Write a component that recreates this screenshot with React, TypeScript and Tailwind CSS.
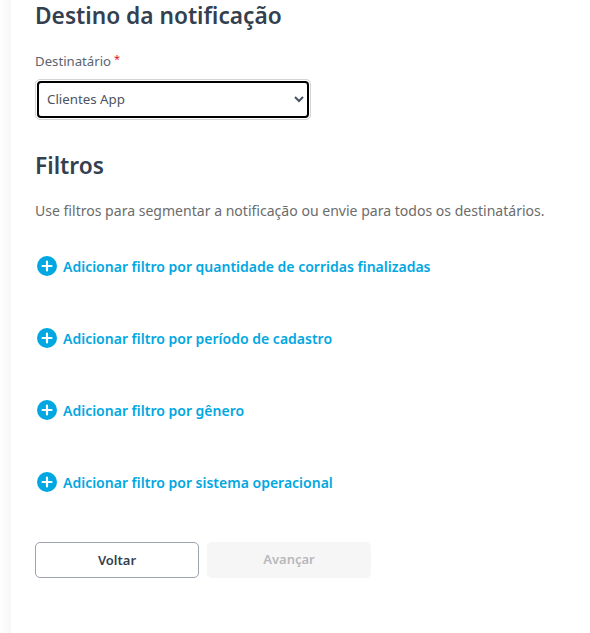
const filtros = [
  'Adicionar filtro por quantidade de corridas finalizadas',
  'Adicionar filtro por período de cadastro',
  'Adicionar filtro por gênero',
  'Adicionar filtro por sistema operacional',
]

function PlusIcon() {
  return (
    <svg width="20" height="20" viewBox="0 0 20 20" className="shrink-0">
      <circle cx="10" cy="10" r="10" fill="#00A7E1" />
      <path d="M10 5.5v9M5.500 10h9" stroke="#fff" strokeWidth="2.2" strokeLinecap="round" />
    </svg>
  )
}

export default function App() {
  return (
    <div className="flex h-[633px] bg-white overflow-hidden font-['Noto_Sans',sans-serif]">
      {/* faint shadow of the sidebar */}
      <div className="w-[11px] shrink-0 bg-gradient-to-r from-white to-[#f7f7f7]" />
      <div className="flex-1 pl-6 pr-6">
        <h2 className="text-[22.7px] leading-8 font-semibold text-[#343f4f]">Destino da notificação</h2>
        <label className="flex items-start gap-[3px] mt-[19px] text-[13.2px] leading-5 text-[#5b6472]">
          Destinatário <span className="text-[11px] leading-4 text-[#e81123]">*</span>
        </label>
        <div className="mt-[8px] w-[276px] h-[41px] rounded-[5px] border border-[#d4d4d4] p-[1px]">
          <select
            defaultValue="Clientes App"
            className="w-full h-full rounded-[4px] border-2 border-black bg-white pl-1 pb-[2px] text-[13.3px] text-[#4a5362]"
          >
            <option>Clientes App</option>
          </select>
        </div>
        <h2 className="mt-[30px] text-[22.7px] leading-8 font-semibold text-[#343f4f]">Filtros</h2>
        <p className="mt-[19px] text-[14.05px] leading-5 text-[#6c6c6c]">
          Use filtros para segmentar a notificação ou envie para todos os destinatários.
        </p>
        <div className="mt-[35px] flex flex-col gap-[52px]">
          {filtros.map((f) => (
            <button key={f} className="flex items-center gap-[6px] h-5 pl-[2px] text-[14px] font-semibold text-[#00A7E1]">
              <PlusIcon />
              {f}
            </button>
          ))}
        </div>
        <div className="mt-[50px] flex gap-2">
          <button className="w-[164px] h-9 pt-px rounded-[5px] border border-[#9ca3af] bg-white text-[13px] font-semibold text-[#343f4f]">
            Voltar
          </button>
          <button className="w-[164px] h-9 rounded-[5px] bg-[#f6f6f6] text-[13px] font-semibold text-[#b8b8bc]">
            Avançar
          </button>
        </div>
      </div>
    </div>
  )
}
